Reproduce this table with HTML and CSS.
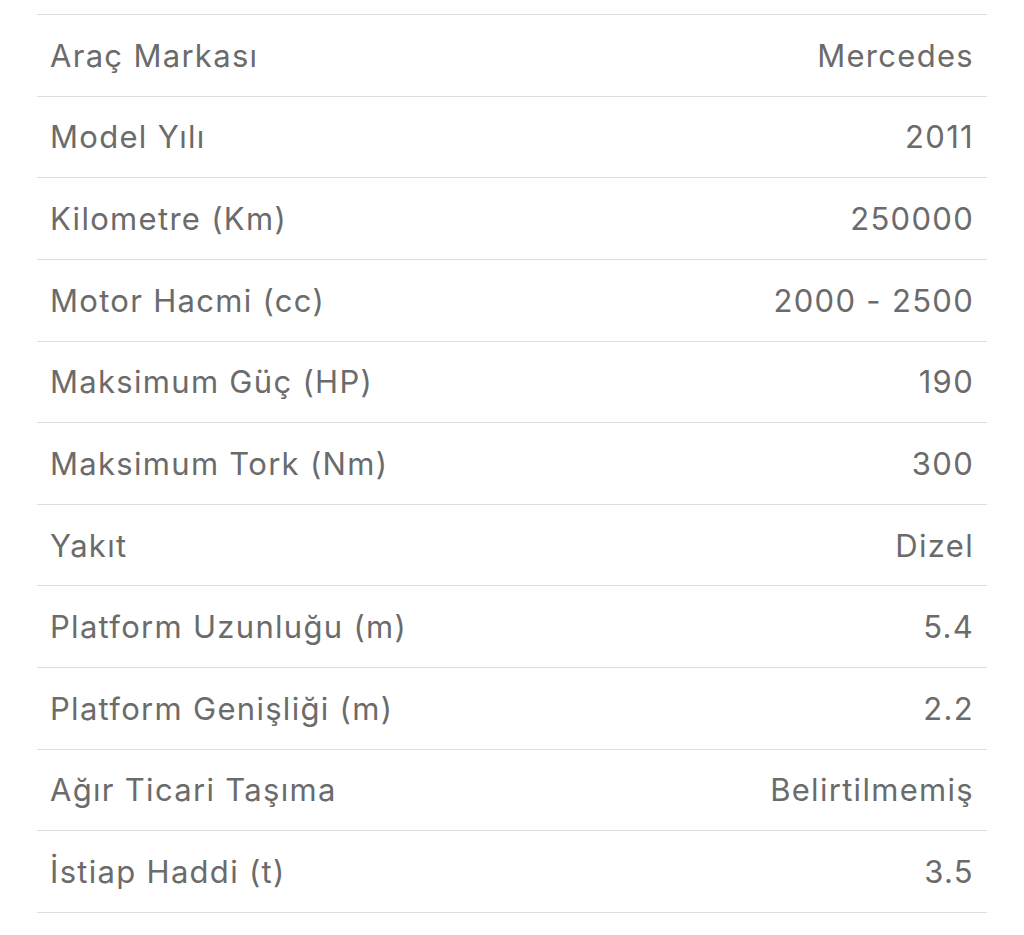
FILE: index.html
```html
<!DOCTYPE html>
<html lang="tr">
<head>
<meta charset="utf-8">
<link rel="stylesheet" href="styles.css">
</head>
<body>
<div class="specs">
  <div class="row"><span class="label">Araç Markası</span><span class="value">Mercedes</span></div>
  <div class="row"><span class="label">Model Yılı</span><span class="value">2011</span></div>
  <div class="row"><span class="label">Kilometre (Km)</span><span class="value">250000</span></div>
  <div class="row"><span class="label">Motor Hacmi (cc)</span><span class="value">2000 - 2500</span></div>
  <div class="row"><span class="label">Maksimum Güç (HP)</span><span class="value">190</span></div>
  <div class="row"><span class="label">Maksimum Tork (Nm)</span><span class="value">300</span></div>
  <div class="row"><span class="label">Yakıt</span><span class="value">Dizel</span></div>
  <div class="row"><span class="label">Platform Uzunluğu (m)</span><span class="value">5.4</span></div>
  <div class="row"><span class="label">Platform Genişliği (m)</span><span class="value">2.2</span></div>
  <div class="row"><span class="label">Ağır Ticari Taşıma</span><span class="value">Belirtilmemiş</span></div>
  <div class="row"><span class="label">İstiap Haddi (t)</span><span class="value">3.5</span></div>
</div>
</body>
</html>
```
FILE: styles.css
```css
html, body {
  margin: 0;
  background: #ffffff;
}
body {
  padding: 14px 37px 0 37px;
  font-family: Inter, "Noto Sans", sans-serif;
  color: #6b6b6b;
}
.specs {
  border-top: 1px solid #dedede;
}
.row {
  box-sizing: border-box;
  height: 81.64px;
  border-bottom: 1px solid #dedede;
  display: flex;
  align-items: center;
  justify-content: space-between;
  padding: 0 13px 0 13px;
  font-size: 31px;
  letter-spacing: 1.3px;
}
```
